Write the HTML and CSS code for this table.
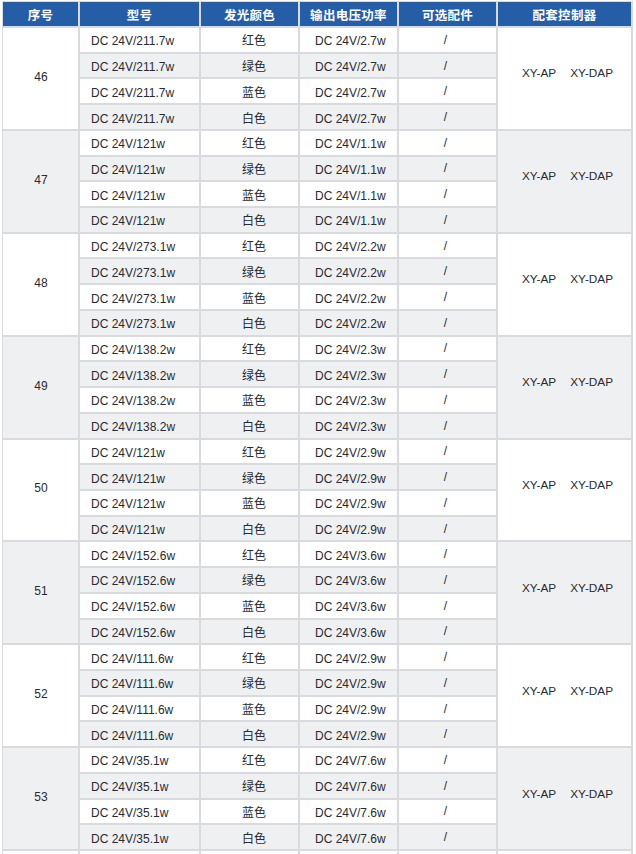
FILE: index.html
```html
<!DOCTYPE html>
<html lang="zh">
<head>
<meta charset="utf-8">
<title>配套控制器</title>
<link rel="stylesheet" href="styles.css">
</head>
<body>
<div class="sheet">
  <div class="th">序号</div>
  <div class="th">型号</div>
  <div class="th">发光颜色</div>
  <div class="th">输出电压功率</div>
  <div class="th">可选配件</div>
  <div class="th">配套控制器</div>

  <div class="no">46</div>
  <div class="c model">DC 24V/211.7w</div><div class="c color">红色</div><div class="c out">DC 24V/2.7w</div><div class="c acc">/</div>
  <div class="ctl"><span>XY-AP</span><span>XY-DAP</span></div>
  <div class="c alt model">DC 24V/211.7w</div><div class="c alt color">绿色</div><div class="c alt out">DC 24V/2.7w</div><div class="c alt acc">/</div>
  <div class="c model">DC 24V/211.7w</div><div class="c color">蓝色</div><div class="c out">DC 24V/2.7w</div><div class="c acc">/</div>
  <div class="c alt model">DC 24V/211.7w</div><div class="c alt color">白色</div><div class="c alt out">DC 24V/2.7w</div><div class="c alt acc">/</div>

  <div class="no alt">47</div>
  <div class="c model">DC 24V/121w</div><div class="c color">红色</div><div class="c out">DC 24V/1.1w</div><div class="c acc">/</div>
  <div class="ctl alt"><span>XY-AP</span><span>XY-DAP</span></div>
  <div class="c alt model">DC 24V/121w</div><div class="c alt color">绿色</div><div class="c alt out">DC 24V/1.1w</div><div class="c alt acc">/</div>
  <div class="c model">DC 24V/121w</div><div class="c color">蓝色</div><div class="c out">DC 24V/1.1w</div><div class="c acc">/</div>
  <div class="c alt model">DC 24V/121w</div><div class="c alt color">白色</div><div class="c alt out">DC 24V/1.1w</div><div class="c alt acc">/</div>

  <div class="no">48</div>
  <div class="c model">DC 24V/273.1w</div><div class="c color">红色</div><div class="c out">DC 24V/2.2w</div><div class="c acc">/</div>
  <div class="ctl"><span>XY-AP</span><span>XY-DAP</span></div>
  <div class="c alt model">DC 24V/273.1w</div><div class="c alt color">绿色</div><div class="c alt out">DC 24V/2.2w</div><div class="c alt acc">/</div>
  <div class="c model">DC 24V/273.1w</div><div class="c color">蓝色</div><div class="c out">DC 24V/2.2w</div><div class="c acc">/</div>
  <div class="c alt model">DC 24V/273.1w</div><div class="c alt color">白色</div><div class="c alt out">DC 24V/2.2w</div><div class="c alt acc">/</div>

  <div class="no alt">49</div>
  <div class="c model">DC 24V/138.2w</div><div class="c color">红色</div><div class="c out">DC 24V/2.3w</div><div class="c acc">/</div>
  <div class="ctl alt"><span>XY-AP</span><span>XY-DAP</span></div>
  <div class="c alt model">DC 24V/138.2w</div><div class="c alt color">绿色</div><div class="c alt out">DC 24V/2.3w</div><div class="c alt acc">/</div>
  <div class="c model">DC 24V/138.2w</div><div class="c color">蓝色</div><div class="c out">DC 24V/2.3w</div><div class="c acc">/</div>
  <div class="c alt model">DC 24V/138.2w</div><div class="c alt color">白色</div><div class="c alt out">DC 24V/2.3w</div><div class="c alt acc">/</div>

  <div class="no">50</div>
  <div class="c model">DC 24V/121w</div><div class="c color">红色</div><div class="c out">DC 24V/2.9w</div><div class="c acc">/</div>
  <div class="ctl"><span>XY-AP</span><span>XY-DAP</span></div>
  <div class="c alt model">DC 24V/121w</div><div class="c alt color">绿色</div><div class="c alt out">DC 24V/2.9w</div><div class="c alt acc">/</div>
  <div class="c model">DC 24V/121w</div><div class="c color">蓝色</div><div class="c out">DC 24V/2.9w</div><div class="c acc">/</div>
  <div class="c alt model">DC 24V/121w</div><div class="c alt color">白色</div><div class="c alt out">DC 24V/2.9w</div><div class="c alt acc">/</div>

  <div class="no alt">51</div>
  <div class="c model">DC 24V/152.6w</div><div class="c color">红色</div><div class="c out">DC 24V/3.6w</div><div class="c acc">/</div>
  <div class="ctl alt"><span>XY-AP</span><span>XY-DAP</span></div>
  <div class="c alt model">DC 24V/152.6w</div><div class="c alt color">绿色</div><div class="c alt out">DC 24V/3.6w</div><div class="c alt acc">/</div>
  <div class="c model">DC 24V/152.6w</div><div class="c color">蓝色</div><div class="c out">DC 24V/3.6w</div><div class="c acc">/</div>
  <div class="c alt model">DC 24V/152.6w</div><div class="c alt color">白色</div><div class="c alt out">DC 24V/3.6w</div><div class="c alt acc">/</div>

  <div class="no">52</div>
  <div class="c model">DC 24V/111.6w</div><div class="c color">红色</div><div class="c out">DC 24V/2.9w</div><div class="c acc">/</div>
  <div class="ctl"><span>XY-AP</span><span>XY-DAP</span></div>
  <div class="c alt model">DC 24V/111.6w</div><div class="c alt color">绿色</div><div class="c alt out">DC 24V/2.9w</div><div class="c alt acc">/</div>
  <div class="c model">DC 24V/111.6w</div><div class="c color">蓝色</div><div class="c out">DC 24V/2.9w</div><div class="c acc">/</div>
  <div class="c alt model">DC 24V/111.6w</div><div class="c alt color">白色</div><div class="c alt out">DC 24V/2.9w</div><div class="c alt acc">/</div>

  <div class="no alt">53</div>
  <div class="c model">DC 24V/35.1w</div><div class="c color">红色</div><div class="c out">DC 24V/7.6w</div><div class="c acc">/</div>
  <div class="ctl alt"><span>XY-AP</span><span>XY-DAP</span></div>
  <div class="c alt model">DC 24V/35.1w</div><div class="c alt color">绿色</div><div class="c alt out">DC 24V/7.6w</div><div class="c alt acc">/</div>
  <div class="c model">DC 24V/35.1w</div><div class="c color">蓝色</div><div class="c out">DC 24V/7.6w</div><div class="c acc">/</div>
  <div class="c alt model">DC 24V/35.1w</div><div class="c alt color">白色</div><div class="c alt out">DC 24V/7.6w</div><div class="c alt acc">/</div>

  <div class="c"></div><div class="c"></div><div class="c"></div><div class="c"></div><div class="c"></div><div class="c"></div>
</div>
</body>
</html>
```
FILE: styles.css
```css
html, body {
  margin: 0;
  padding: 0;
  background: #ffffff;
}

body {
  font-family: "Liberation Sans", "Noto Sans CJK SC", sans-serif;
  color: #2a2a2e;
  overflow: hidden;
}

.sheet {
  display: grid;
  grid-template-columns: 75px 119px 97px 97px 97px 133px;
  grid-template-rows: 24px;
  grid-auto-rows: 23.72px;
  gap: 2px;
  width: max-content;
  margin: 1px 0 0 2px;
  padding: 1px 2px 2px 1px;
  background: #d9dadd;
}

.th {
  background: #255ea7;
  color: #ffffff;
  font-weight: bold;
  font-size: 12.5px;
  display: flex;
  align-items: center;
  justify-content: center;
  letter-spacing: 0.3px;
}

.c, .no, .ctl {
  background: #ffffff;
  display: flex;
  align-items: center;
  font-size: 12px;
}

.alt {
  background: #eff0f2;
}

.no {
  grid-row: span 4;
  justify-content: center;
  padding-left: 1px;
  padding-bottom: 3px;
}

.ctl {
  grid-row: span 4;
  justify-content: center;
  gap: 14px;
  padding-left: 6px;
  padding-bottom: 10px;
  font-size: 11.8px;
}

.model {
  padding-left: 11px;
  padding-top: 3px;
}

.color {
  justify-content: center;
  padding-left: 9px;
}

.out {
  padding-left: 15px;
  padding-top: 3px;
}

.acc {
  justify-content: center;
  padding-right: 4px;
}
```
